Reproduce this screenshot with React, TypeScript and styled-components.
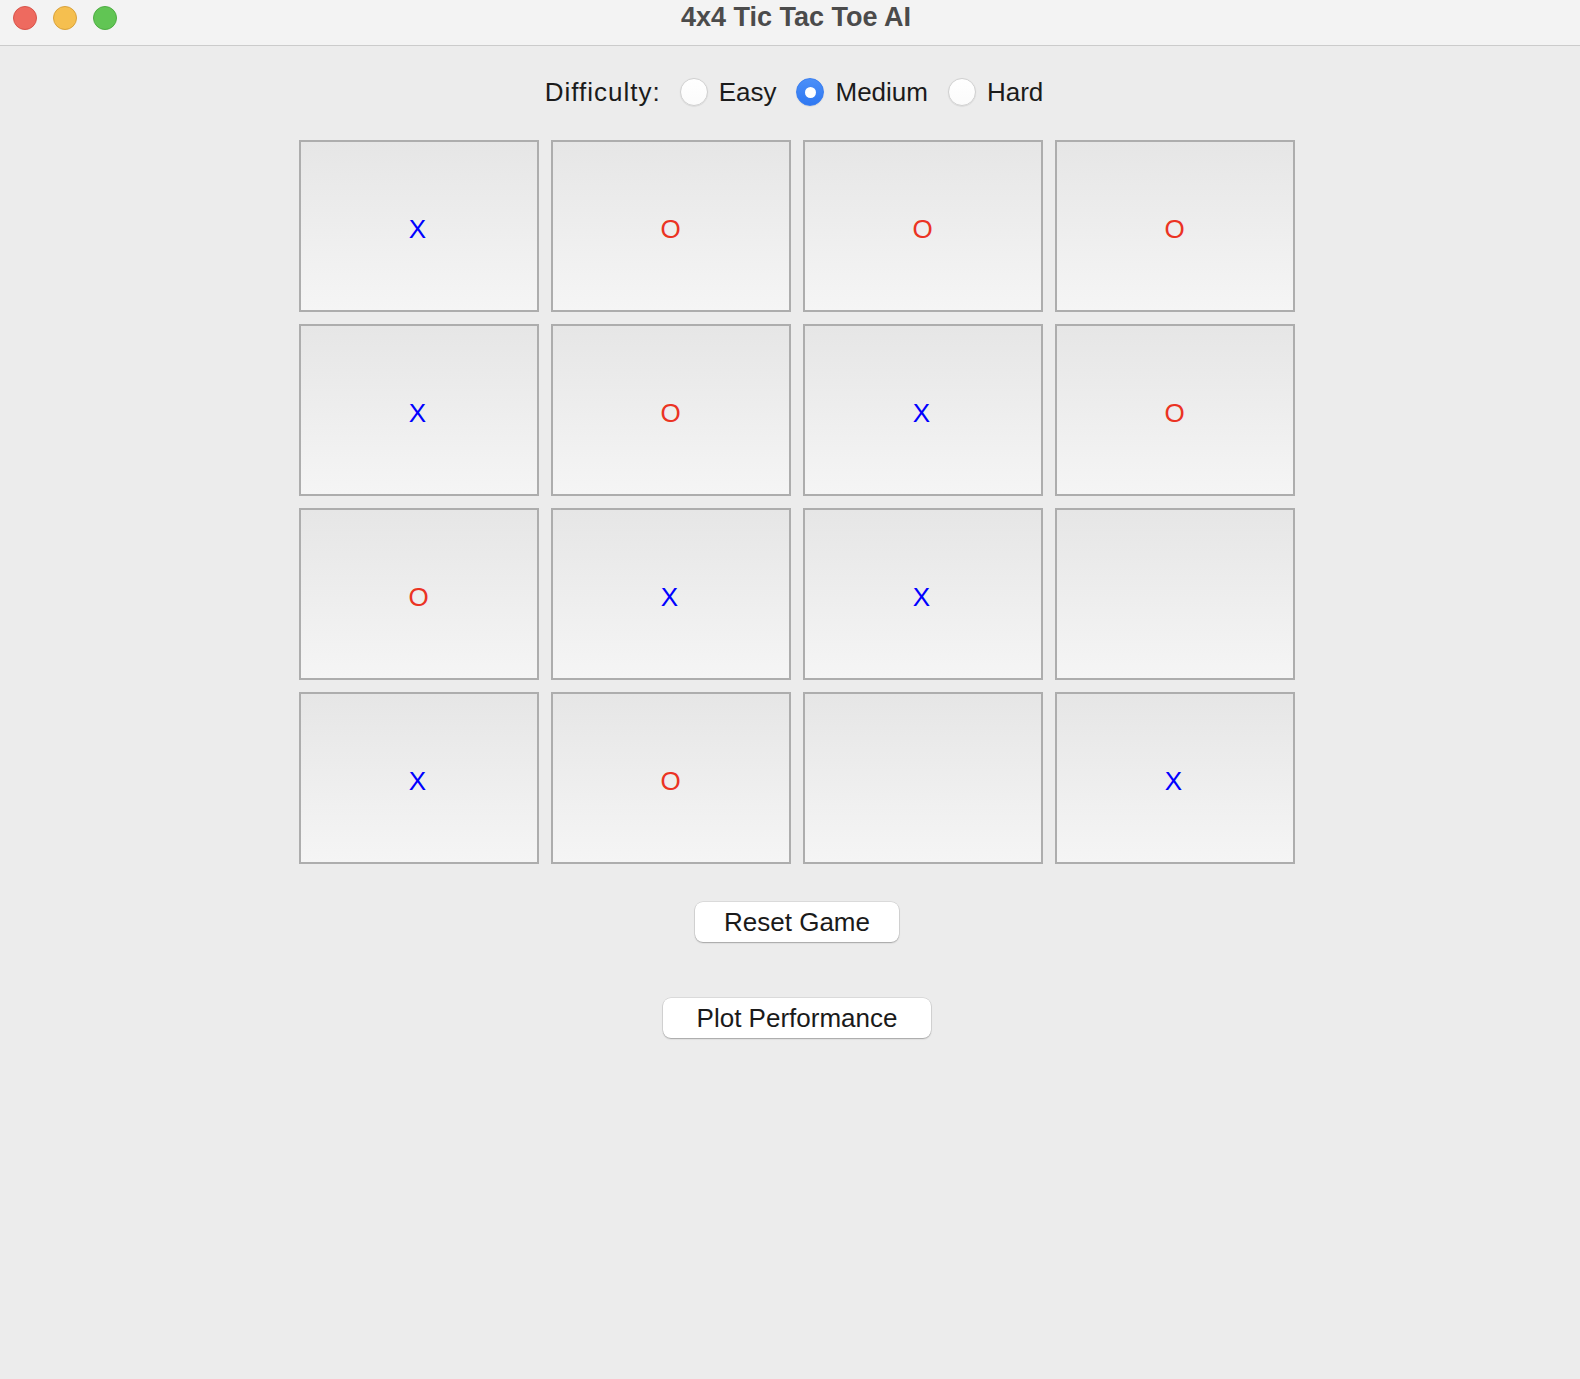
import React from "react";
import styled, { createGlobalStyle } from "styled-components";

const GlobalStyle = createGlobalStyle`
  html, body, #root {
    margin: 0;
    padding: 0;
    height: 100%;
    background: #ececec;
  }
  body {
    font-family: "Liberation Sans", Arial, sans-serif;
  }
`;

const Window = styled.div`
  width: 1580px;
  min-height: 1379px;
  background: #ececec;
  display: flex;
  flex-direction: column;
`;

const TitleBar = styled.div`
  height: 45px;
  border-bottom: 1px solid #cbcbcb;
  background: #f3f3f3;
  display: grid;
  grid-template-columns: 1fr auto 1fr;
  align-items: start;
  padding-left: 12px;
  box-sizing: content-box;
`;

const Lights = styled.div`
  display: flex;
  gap: 16px;
  padding-top: 6px;
  padding-left: 1px;
`;

const Light = styled.span<{ $fill: string; $edge: string }>`
  width: 24px;
  height: 24px;
  border-radius: 50%;
  box-sizing: border-box;
  background: ${(p) => p.$fill};
  border: 1px solid ${(p) => p.$edge};
`;

const Title = styled.div`
  font-weight: bold;
  font-size: 27px;
  line-height: 27px;
  padding-top: 4px;
  color: #4b4b4b;
  white-space: nowrap;
`;

const Content = styled.div`
  display: flex;
  flex-direction: column;
  align-items: center;
  padding-left: 14px;
`;

const DifficultyRow = styled.div`
  margin-top: 32px;
  margin-right: 6px;
  height: 28px;
  display: flex;
  align-items: center;
  font-size: 26px;
  color: #1b1b1b;
`;

const Label = styled.span`
  margin-right: 19px;
  letter-spacing: 1px;
`;

const RadioOption = styled.label`
  display: flex;
  align-items: center;
  gap: 11px;
  margin-right: 20px;
  &:last-child {
    margin-right: 0;
  }
`;

const RadioDot = styled.span<{ $checked?: boolean }>`
  width: 28px;
  height: 28px;
  border-radius: 50%;
  box-sizing: border-box;
  display: flex;
  align-items: center;
  justify-content: center;
  background: ${(p) =>
    p.$checked ? "linear-gradient(#4b8ff8, #2f78f2)" : "linear-gradient(#ffffff, #fbfbfb)"};
  border: 1px solid ${(p) => (p.$checked ? "#3a7ef0" : "#d0d0d0")};
  box-shadow: 0 0.5px 1px rgba(0, 0, 0, 0.12);
  &::after {
    content: "";
    display: ${(p) => (p.$checked ? "block" : "none")};
    width: 11px;
    height: 11px;
    border-radius: 50%;
    background: #ffffff;
  }
`;

const Board = styled.div`
  margin-top: 34px;
  display: grid;
  grid-template-columns: repeat(4, 240px);
  grid-auto-rows: 172px;
  gap: 12px;
`;

const Cell = styled.div<{ $mark?: string }>`
  box-sizing: border-box;
  border: 2px solid #adadad;
  background: linear-gradient(to bottom, #e6e6e6, #f5f5f5);
  display: flex;
  align-items: center;
  justify-content: center;
  font-size: 26px;
  padding-top: 6px;
  padding-right: ${(p) => (p.$mark === "X" ? 3 : 1)}px;
  color: ${(p) => (p.$mark === "X" ? "#0000ff" : "#eb3323")};
`;

const Button = styled.button<{ $gap: number; $pad: number }>`
  margin-top: ${(p) => p.$gap}px;
  height: 40px;
  padding: 0 ${(p) => p.$pad}px;
  border: none;
  border-radius: 8px;
  background: #ffffff;
  box-shadow: 0 0 0 0.5px rgba(0, 0, 0, 0.14), 0 1px 1.5px rgba(0, 0, 0, 0.25);
  font-family: "Liberation Sans", Arial, sans-serif;
  font-size: 26px;
  color: #1a1a1a;
`;

const board: string[][] = [
  ["X", "O", "O", "O"],
  ["X", "O", "X", "O"],
  ["O", "X", "X", ""],
  ["X", "O", "", "X"],
];

export default function App() {
  return (
    <Window>
      <GlobalStyle />
      <TitleBar>
        <Lights>
          <Light $fill="#ee6a5f" $edge="#d8544a" />
          <Light $fill="#f5bf4f" $edge="#d9a23b" />
          <Light $fill="#61c554" $edge="#4ead43" />
        </Lights>
        <Title>4x4 Tic Tac Toe AI</Title>
        <div />
      </TitleBar>
      <Content>
        <DifficultyRow>
          <Label>Difficulty:</Label>
          <RadioOption>
            <RadioDot />
            Easy
          </RadioOption>
          <RadioOption>
            <RadioDot $checked />
            Medium
          </RadioOption>
          <RadioOption>
            <RadioDot />
            Hard
          </RadioOption>
        </DifficultyRow>
        <Board>
          {board.flat().map((m, i) => (
            <Cell key={i} $mark={m}>
              {m}
            </Cell>
          ))}
        </Board>
        <Button $gap={38} $pad={29}>Reset Game</Button>
        <Button $gap={56} $pad={34}>Plot Performance</Button>
      </Content>
    </Window>
  );
}
